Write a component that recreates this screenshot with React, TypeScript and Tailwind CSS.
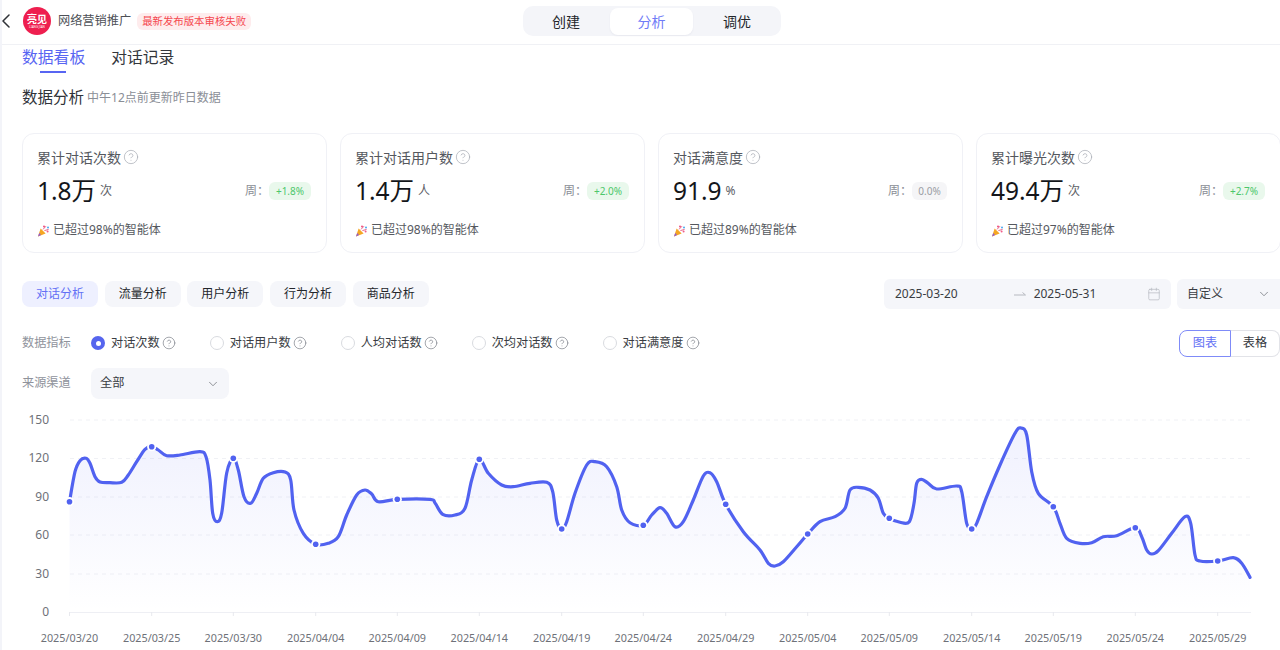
import { CircleHelp, ChevronDown, ChevronLeft, Calendar } from "lucide-react";

const points: [number, number][] = [
  [69.5, 501.7], [75, 471.7], [80, 460.7], [86, 458.3], [90, 463.3], [95, 476.7], [100, 482], [110, 482.7], [121.7, 482.3],
  [128.3, 475], [136.7, 461.7], [145, 449.3], [151.7, 446.7], [158.3, 450], [166.7, 455.7], [180, 455], [200, 451.7],
  [206, 456.7], [210, 480], [212.7, 513.3], [217.3, 521.7], [221.7, 513], [226.7, 473], [233.3, 458.3], [238.3, 470],
  [244, 496.7], [250.7, 503.3], [256.7, 493.3], [263.3, 478.3], [273.3, 472.7], [285, 472], [290.7, 480], [294, 510],
  [303.3, 533.3], [315.7, 544.3], [328.3, 543.3], [338.3, 536.7], [346.7, 515], [356.7, 495], [365, 490], [371.7, 494],
  [378.3, 501.7], [397.3, 499.3], [430, 499.3], [435, 503], [442.7, 514.3], [455, 515], [465, 508.3], [471.7, 480],
  [479.3, 459.3], [488.3, 473.3], [501.7, 485], [513.3, 486.7], [530, 483.3], [546.7, 482.3], [552.7, 491.7], [556.7, 520],
  [561.7, 529], [566.7, 521.7], [575, 493.3], [586.7, 465], [595, 461.7], [606.7, 466.7], [616.7, 486.7], [621.7, 510],
  [630, 522.7], [643.3, 525.3], [651.7, 515], [660, 507.7], [666.7, 513.3], [675, 526.7], [683.3, 521.7], [693.3, 500],
  [703.3, 476], [710, 472.7], [716.7, 481.7], [725.7, 504.3], [743.3, 531.7], [760, 550], [768.3, 563.3], [775, 566],
  [783.3, 561.7], [796.7, 546.7], [807.7, 534], [820, 521.7], [835, 516.7], [845, 508.3], [850, 490], [858.3, 487.3],
  [870, 490], [878.3, 498.3], [883.3, 513.3], [889.3, 518.3], [900, 522.3], [909.3, 521.7], [914, 503.3], [916.7, 483.3],
  [921.7, 479.3], [928.3, 483.3], [936.7, 489], [956.7, 486], [961.7, 491.7], [966.7, 523.3], [971.7, 529], [976.7, 523.3],
  [986.7, 496.7], [1000, 465], [1015, 433.3], [1021, 428], [1026.7, 435], [1031.7, 471.7], [1038.3, 493.3], [1053.3, 506.7],
  [1060, 523.3], [1066.7, 538.3], [1080, 543.3], [1091.7, 542.7], [1103.3, 536.7], [1116.7, 535.7], [1135.3, 527.7],
  [1141.7, 536.7], [1146.7, 550], [1151.7, 554], [1158.3, 550.7], [1171.7, 533.3], [1185, 516.7], [1190.7, 523.3],
  [1195, 555], [1200, 561], [1217.7, 561], [1233.3, 557.7], [1241.7, 563.3], [1250, 577.3],
];

const markers: [number, number][] = [
  [69.5, 501.7], [151.7, 446.7], [233.3, 458.3], [315.7, 544.3], [397.3, 499.3], [479.3, 459.3], [561.7, 529], [643.3, 525.3],
  [725.7, 504.3], [807.7, 534], [889.3, 518.3], [971.7, 529], [1053.3, 506.7], [1135.3, 527.7], [1217.7, 561],
];

const dates = [
  "2025/03/20", "2025/03/25", "2025/03/30", "2025/04/04", "2025/04/09", "2025/04/14", "2025/04/19", "2025/04/24",
  "2025/04/29", "2025/05/04", "2025/05/09", "2025/05/14", "2025/05/19", "2025/05/24", "2025/05/29",
];

const yTicks: [string, number][] = [["150", 420], ["120", 458.5], ["90", 497], ["60", 535], ["30", 574]];

// catmull-rom through the traced points
function smooth(pts: [number, number][]) {
  let d = `M${pts[0][0]} ${pts[0][1]}`;
  for (let i = 0; i < pts.length - 1; i++) {
    const p0 = pts[i - 1] ?? pts[i];
    const p1 = pts[i];
    const p2 = pts[i + 1];
    const p3 = pts[i + 2] ?? p2;
    const c1x = p1[0] + (p2[0] - p0[0]) / 6;
    const c1y = p1[1] + (p2[1] - p0[1]) / 6;
    const c2x = p2[0] - (p3[0] - p1[0]) / 6;
    const c2y = p2[1] - (p3[1] - p1[1]) / 6;
    d += `C${c1x.toFixed(1)} ${c1y.toFixed(1)} ${c2x.toFixed(1)} ${c2y.toFixed(1)} ${p2[0]} ${p2[1]}`;
  }
  return d;
}

const cards = [
  { title: "累计对话次数", value: "1.8万", unit: "次", delta: "+1.8%", up: true, rank: "已超过98%的智能体" },
  { title: "累计对话用户数", value: "1.4万", unit: "人", delta: "+2.0%", up: true, rank: "已超过98%的智能体" },
  { title: "对话满意度", value: "91.9", unit: "%", delta: "0.0%", up: false, rank: "已超过89%的智能体" },
  { title: "累计曝光次数", value: "49.4万", unit: "次", delta: "+2.7%", up: true, rank: "已超过97%的智能体" },
];

const metrics = ["对话次数", "对话用户数", "人均对话数", "次均对话数", "对话满意度"];
const analysisTabs = ["对话分析", "流量分析", "用户分析", "行为分析", "商品分析"];

function Popper() {
  return (
    <svg width="13" height="13" viewBox="0 0 13 13" className="shrink-0">
      <path d="M1 12.5 3.6 4.6 8.6 9.6Z" fill="#f5a623" />
      <path d="M2.2 9 4 10.9 1 12.5Z" fill="#8e5bd6" />
      <circle cx="7" cy="2.4" r="1" fill="#ef4f7c" />
      <circle cx="11" cy="3.4" r="1" fill="#4aa8f0" />
      <circle cx="10.6" cy="7.6" r="1" fill="#f25c8a" />
      <path d="M6 5.4 9 2.2M7.4 6.6 11.6 5.4" stroke="#e2557f" strokeWidth="0.9" fill="none" />
    </svg>
  );
}

function Card({ title, value, unit, delta, up, rank }: (typeof cards)[number]) {
  return (
    <div className="w-[305px] h-[120px] shrink-0 rounded-xl border border-[#f0f1f6] pt-[13px] pl-[14px] pr-[15px]">
      <div className="flex items-center h-5 gap-[2px] text-[14px] text-[#55585e]">
        {title}
        <CircleHelp size={16} strokeWidth={1.1} className="text-[#a9adb5]" />
      </div>
      <div className="flex items-center h-9 mt-[6px]">
        <span className="text-[24.5px] leading-9 text-[#14161a]">{value}</span>
        <span className="ml-1 text-[12px] text-[#5d6066]">{unit}</span>
        <span className="ml-auto text-[12px] text-[#8a8e96]">{"周\uFF1A"}</span>
        <span
          className={
            up
              ? "flex h-[18px] w-[42px] items-center justify-center rounded-md bg-[#e9f8ec] text-[10px] text-[#4cc76b]"
              : "flex h-[18px] w-[35px] items-center justify-center rounded-md bg-[#f5f5f7] text-[10px] text-[#9a9da5]"
          }
        >
          {delta}
        </span>
      </div>
      <div className="flex items-center h-5 mt-[11px] gap-[3px] text-[12px] text-[#55585e]">
        <Popper />
        {rank}
      </div>
    </div>
  );
}

function Chart() {
  const line = smooth(points);
  return (
    <svg width="1280" height="240" viewBox="0 410 1280 240" className="block mt-[11px] -ml-[22px]">
      <defs>
        <linearGradient id="area" x1="0" y1="428" x2="0" y2="612" gradientUnits="userSpaceOnUse">
          <stop offset="0" stopColor="#5865f2" stopOpacity="0.09" />
          <stop offset="1" stopColor="#5865f2" stopOpacity="0" />
        </linearGradient>
      </defs>
      {yTicks.map(([label, y]) => (
        <line key={label} x1="70" x2="1251" y1={y} y2={y} stroke="#f0f1f5" strokeDasharray="4 4" />
      ))}
      <path d={`${line}L1250 612L69.5 612Z`} fill="url(#area)" />
      <line x1="70" x2="1251" y1="612.5" y2="612.5" stroke="#eeeff4" />
      {markers.map(([x]) => (
        <line key={x} x1={x} x2={x} y1="612" y2="616" stroke="#e8e9ee" />
      ))}
      <path d={line} fill="none" stroke="#5162f0" strokeWidth="3.2" strokeLinecap="round" strokeLinejoin="round" />
      {markers.map(([x, y]) => (
        <g key={x}>
          <circle cx={x} cy={y} r="4.6" fill="#fff" />
          <circle cx={x} cy={y} r="2.8" fill="#5162f0" />
        </g>
      ))}
      {[...yTicks, ["0", 612] as [string, number]].map(([label, y]) => (
        <text key={label} x="49" y={y + 3.5} textAnchor="end" fontSize="12" fill="#6e7178">
          {label}
        </text>
      ))}
      {dates.map((date, i) => (
        <text key={date} x={markers[i][0]} y="642" textAnchor="middle" fontSize="10.8" fill="#6e7178">
          {date}
        </text>
      ))}
    </svg>
  );
}

export default function App() {
  return (
    <div className="w-[1280px] h-[650px] overflow-hidden bg-white border-l-2 border-[#f3f4f9] font-['Noto_Sans','Noto_Sans_CJK_SC',sans-serif]">
      <header className="flex h-[45px] -ml-[2px] items-center border-b border-[#f0f1f5] pb-[2px]">
        <div className="flex w-[523px] shrink-0 items-center">
          <ChevronLeft size={24} strokeWidth={1.5} className="text-[#2f3238] -ml-[6.5px]" />
          <div className="ml-[5.5px] flex h-[28px] w-[28px] flex-col items-center justify-center rounded-full bg-[#ee1f4f] text-white">
            <span className="text-[10px] font-bold leading-[12px]">亮见</span>
            <span className="text-[3px] leading-[4px]">LIANG JIAN</span>
          </div>
          <span className="ml-[7px] text-[12.2px] text-[#4d5056]">网络营销推广</span>
          <span className="ml-[6px] h-[17px] w-[114px] rounded-md bg-[#feeced] text-center text-[10.4px] leading-[17px] text-[#f5484f]">最新发布版本审核失败</span>
        </div>
        <div className="flex h-[30px] w-[258px] items-center rounded-[10px] bg-[#f4f5f9] pl-[1px] text-[14px] text-[#23262b]">
          <span className="w-[84px] text-center">创建</span>
          <span className="ml-[2px] h-[27px] w-[83px] rounded-lg bg-white text-center leading-[27px] text-[#6f7bf7] shadow-[0_1px_2px_rgba(30,40,90,0.06)]">分析</span>
          <span className="w-[88px] text-center">调优</span>
        </div>
      </header>

      <main className="pl-5">
        <div className="flex gap-[26px] h-6 text-[15.8px] leading-6">
          <span className="relative text-[#5865f2]">
            数据看板
            <span className="absolute left-[18px] top-[26px] h-[1.5px] w-[26px] bg-[#5865f2]" />
          </span>
          <span className="text-[#33363c]">对话记录</span>
        </div>

        <div className="mt-[19px] flex h-5 items-center gap-[3px]">
          <span className="text-[15.5px] text-[#2f3238]">数据分析</span>
          <span className="text-[12px] text-[#8a8e96]">中午12点前更新昨日数据</span>
        </div>

        <div className="mt-[25px] flex gap-[13px]">
          {cards.map((c) => (
            <Card key={c.title} {...c} />
          ))}
        </div>

        <div className="mt-[26px] flex h-[30px] items-center">
          <div className="flex gap-[6.7px]">
            {analysisTabs.map((t, i) => (
              <span
                key={t}
                className={
                  i === 0
                    ? "flex h-[26px] w-[76px] items-center justify-center rounded-lg bg-[#eef0ff] text-[12px] text-[#6370f5]"
                    : "flex h-[26px] w-[76px] items-center justify-center rounded-lg bg-[#f5f6fa] text-[12px] text-[#23262b]"
                }
              >
                {t}
              </span>
            ))}
          </div>
          <div className="ml-auto flex h-[30px] w-[287px] items-center rounded-md bg-[#f5f6fa] pb-px pl-[11px] pr-[10px] text-[12px] text-[#3a3d43]">
            <span>2025-03-20</span>
            <svg width="12" height="5" viewBox="0 0 12 5" className="ml-[56px] text-[#b6b9c0]">
              <path d="M0 4H11.5L8.5 1.5" fill="none" stroke="currentColor" strokeWidth="1" />
            </svg>
            <span className="ml-2">2025-05-31</span>
            <Calendar size={14} strokeWidth={1.2} className="ml-auto text-[#b6b9c0]" />
          </div>
          <div className="ml-[6px] flex h-[30px] w-[103px] items-center rounded-l-md bg-[#f5f6fa] pb-px pl-[10px] pr-[9px] text-[12px] text-[#3a3d43]">
            自定义
            <ChevronDown size={14} strokeWidth={1.3} className="ml-auto text-[#6e7178]" />
          </div>
        </div>

        <div className="mt-[21px] flex h-[27px] items-center text-[12.2px]">
          <span className="w-[69px] text-[#8f939c]">数据指标</span>
          <div className="flex gap-[35px]">
            {metrics.map((m, i) => (
              <div key={m} className="flex items-center text-[#3a3d43]">
                {i === 0 ? (
                  <span className="flex h-[14px] w-[14px] items-center justify-center rounded-full bg-[#5665ee]">
                    <span className="h-[5px] w-[5px] rounded-full bg-white" />
                  </span>
                ) : (
                  <span className="h-[14px] w-[14px] rounded-full border border-[#d9dbe0]" />
                )}
                <span className="ml-[6px]">{m}</span>
                <CircleHelp size={14} strokeWidth={1.2} className="ml-[2px] -mr-[1px] text-[#7d8189]" />
              </div>
            ))}
          </div>
          <div className="ml-auto flex h-[27px]">
            <span className="flex w-[52px] items-center justify-center rounded-l-lg border border-[#7f8bf8] text-[#6370f5]">图表</span>
            <span className="flex w-[49px] items-center justify-center rounded-r-lg border border-l-0 border-[#e2e3e8] text-[#33363c]">表格</span>
          </div>
        </div>

        <div className="mt-[11px] flex h-[31px] items-center text-[12.2px]">
          <span className="w-[69px] text-[#8f939c]">来源渠道</span>
          <div className="flex h-[31px] w-[138px] items-center rounded-lg bg-[#f5f6fa] pl-[9px] pr-[9px] text-[#3a3d43]">
            全部
            <ChevronDown size={14} strokeWidth={1.3} className="ml-auto text-[#6e7178]" />
          </div>
        </div>

        <Chart />
      </main>
    </div>
  );
}
